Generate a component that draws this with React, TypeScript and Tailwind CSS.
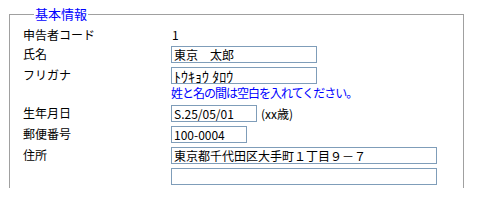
const font = { fontFamily: '"Noto Sans CJK JP", "Liberation Sans", sans-serif' }

const inputCls =
  "h-[17px] border border-[#7f9db9] bg-white px-[2px] leading-[15px] text-black outline-none"

function Row({ label, children, className }: { label?: string; children: React.ReactNode; className?: string }) {
  return (
    <div className={"flex items-start " + (className ?? "")}>
      <div className="w-[148px] shrink-0 text-[12px] leading-[15px] text-black">{label}</div>
      <div className="flex items-center">{children}</div>
    </div>
  )
}

export default function App() {
  return (
    <div className="h-[207px] w-[481px] bg-white pl-[9px] pt-[6px]" style={font}>
      <fieldset className="h-[182px] w-[455px] border border-b-0 border-[#a0a0a0] pl-[13px]">
        <legend className="ml-[11px] px-[1px] text-[13px] leading-[16px] text-[#0000ff]">基本情報</legend>
        <Row label="申告者コード" className="mt-[5px]">
          <span className="pl-[1px] text-[12px] leading-[16px] text-black">1</span>
        </Row>
        <Row label="氏名" className="mt-[3px]">
          <input className={inputCls + " w-[146px] text-[12px]"} defaultValue="東京　太郎" readOnly />
        </Row>
        <Row label="フリガナ" className="mt-[4px]">
          <input className={inputCls + " w-[146px] text-[14px]"} defaultValue="ﾄｳｷｮｳ ﾀﾛｳ" readOnly />
        </Row>
        <Row className="mt-[1px]">
          <span className="text-[12px] leading-[16px] tracking-[-1px] text-[#0000ff]">姓と名の間は空白を入れてください。</span>
        </Row>
        <Row label="生年月日" className="mt-[4px]">
          <input className={inputCls + " w-[86px] text-[12px]"} defaultValue="S.25/05/01" readOnly />
          <span className="ml-[4px] text-[12px] leading-[16px] text-black">(xx歳)</span>
        </Row>
        <Row label="郵便番号" className="mt-[4px]">
          <input className={inputCls + " w-[76px] text-[12px]"} defaultValue="100-0004" readOnly />
        </Row>
        <Row label="住所" className="mt-[4px]">
          <input className={inputCls + " w-[266px] text-[12px]"} defaultValue="東京都千代田区大手町１丁目９－７" readOnly />
        </Row>
        <Row className="mt-[4px]">
          <input className={inputCls + " w-[266px] text-[12px]"} defaultValue="" readOnly />
        </Row>
      </fieldset>
    </div>
  )
}
